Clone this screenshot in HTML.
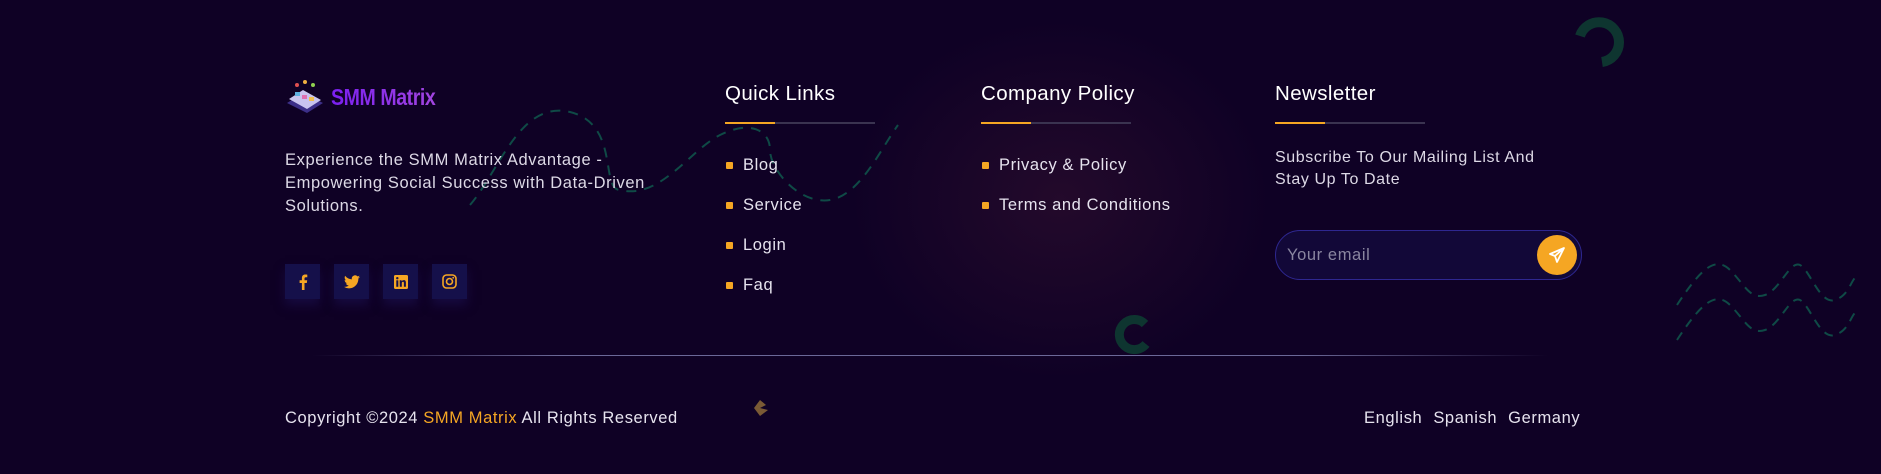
<!DOCTYPE html>
<html><head><meta charset="utf-8">
<style>
*{margin:0;padding:0;box-sizing:border-box}
body{width:1881px;height:474px;overflow:hidden;background:#0f0125;font-family:"Liberation Sans",sans-serif;color:#e6e3ee;position:relative;letter-spacing:0.6px}
.glow{position:absolute;left:850px;top:20px;width:420px;height:360px;background:radial-gradient(ellipse at center,rgba(60,20,50,0.45),rgba(15,1,37,0) 70%)}
.abs{position:absolute}
.logo{left:285px;top:79px;display:flex;align-items:center}
.logo span{font-weight:bold;font-size:23px;margin-left:6px;letter-spacing:-0.5px;background:linear-gradient(90deg,#7a1ff0,#a245e0);-webkit-background-clip:text;color:transparent;display:inline-block;transform:scaleX(0.85);transform-origin:left center}
.about{left:285px;top:149px;font-size:16.5px;line-height:23px;width:420px;color:#ddd9e6;white-space:nowrap}
.soc{top:264px;width:35px;height:35px;background:#15104a;display:flex;align-items:center;justify-content:center;box-shadow:0 6px 10px rgba(30,20,90,0.5)}
h3{position:absolute;font-weight:normal;font-size:20.5px;color:#fff;top:82px;letter-spacing:0.4px}
.ul{position:absolute;top:122px;height:2px;width:150px;background:#3a3350}
.ul i{display:block;width:50px;height:2px;background:#f5a623}
.li{position:absolute;font-size:16.5px;color:#e6e3ee;white-space:nowrap}
.li:before{content:"";position:absolute;left:-17px;top:6px;width:7px;height:7px;border-radius:1px;background:#f5a623}
.input{left:1275px;top:230px;width:307px;height:50px;border:1.5px solid #2e2790;border-radius:25px;background:#120838}
.input span{position:absolute;left:11px;top:15px;font-size:16.5px;color:#8a86a0}
.btn{position:absolute;right:4px;top:4px;width:40px;height:40px;border-radius:50%;background:#f5a623;display:flex;align-items:center;justify-content:center}
.div{left:312px;top:355px;width:1236px;height:1px;background:linear-gradient(90deg,rgba(120,120,170,0),rgba(130,130,180,0.8) 20%,rgba(130,130,180,0.8) 80%,rgba(120,120,170,0))}
.copy{left:285px;top:409px;font-size:16.5px;white-space:nowrap}
.lang{left:1364px;top:409px;font-size:16.5px;white-space:nowrap}
.lang span{margin-left:11px}
</style></head><body>
<div class="glow"></div>
<svg class="abs" style="left:0;top:0" width="1881" height="474">
<path d="M470 205 C500 170,520 100,570 112 S600 190,620 190 C660 200,690 150,720 135 S770 130,770 150 S800 205,830 200 S880 150,898 125" fill="none" stroke="#0f4a46" stroke-width="2" stroke-dasharray="10 8"/>
<path d="M1677 305 C1700 270,1715 255,1730 270 S1750 300,1765 295 S1790 260,1800 265 S1820 305,1835 300 S1850 280,1858 275" fill="none" stroke="#0f4a46" stroke-width="2" stroke-dasharray="9 7"/>
<path d="M1677 340 C1700 305,1715 290,1730 305 S1750 335,1765 330 S1790 295,1800 300 S1820 340,1835 335 S1850 315,1858 310" fill="none" stroke="#0f4a46" stroke-width="2" stroke-dasharray="9 7"/>
<path d="M1580 36 A20 20 0 1 1 1602 62" fill="none" stroke="#0e3530" stroke-width="10"/>
<path d="M1145 324 A15 15 0 1 0 1146 344" fill="none" stroke="#0e3530" stroke-width="9"/>
<path d="M754 408 L760 400 L766 405 L760 408 L768 410 L760 416 Z" fill="#7a5a35"/>
</svg>
<div class="abs logo"><svg width="40" height="36" viewBox="0 0 40 36"><path d="M2 24 L22 34 L38 24 L18 14Z" fill="#3c2f88"/><path d="M4 20 L22 30 L36 21 L18 11Z" fill="#c9c4ef"/><rect x="10" y="13" width="5" height="4" fill="#5fb0e0"/><rect x="17" y="16" width="5" height="4" fill="#e06fb0"/><rect x="24" y="18" width="5" height="4" fill="#f0c050"/><circle cx="20" cy="3" r="2" fill="#f0b040"/><circle cx="12" cy="6" r="2" fill="#e05050"/><circle cx="28" cy="6" r="2" fill="#90d050"/></svg><span>SMM Matrix</span></div>
<div class="abs about">Experience the SMM Matrix Advantage -<br>Empowering Social Success with Data-Driven<br>Solutions.</div>
<div class="abs soc" style="left:285px"><svg width="10" height="16" viewBox="0 0 10 16"><path d="M6.5 16V9h2.3l.4-2.8H6.5V4.5c0-.8.3-1.3 1.4-1.3H9.3V.7C9 .6 8.2.5 7.3.5 5.3.5 3.9 1.700 3.9 4v2.2H1.6V9h2.3v7z" fill="#f5a623"/></svg></div>
<div class="abs soc" style="left:334px"><svg width="16" height="14" viewBox="0 0 24 20"><path d="M24 2.4a9.8 9.8 0 0 1-2.8.8A4.9 4.9 0 0 0 23.3.4a9.900 9.9 0 0 1-3.1 1.2A4.9 4.9 0 0 0 11.8 6 14 14 0 0 1 1.7.9a4.9 4.9 0 0 0 1.5 6.6A4.9 4.9 0 0 1 1 6.9v.1a4.9 4.9 0 0 0 3.9 4.8 4.9 4.9 0 0 1-2.2.1 4.9 4.9 0 0 0 4.6 3.4A9.9 9.9 0 0 1 0 17.3 14 14 0 0 0 7.5 19.5c9.1 0 14-7.5 14-14v-.6A10 10 0 0 0 24 2.4z" fill="#f5a623"/></svg></div>
<div class="abs soc" style="left:383px"><svg width="14" height="14" viewBox="0 0 14 14"><rect width="14" height="14" rx="1.5" fill="#f5a623"/><rect x="2.3" y="5.3" width="2" height="6.5" fill="#15104a"/><circle cx="3.3" cy="3.2" r="1.2" fill="#15104a"/><path d="M5.7 5.3h1.9v1c.4-.7 1.2-1.2 2.2-1.2 1.6 0 2.1 1 2.1 2.6v4.1h-2V8.1c0-.8-.2-1.3-.9-1.3-.8 0-1.2.6-1.2 1.4v3.6h-2z" fill="#15104a"/></svg></div>
<div class="abs soc" style="left:432px"><svg width="15" height="15" viewBox="0 0 15 15"><rect x="1" y="1" width="13" height="13" rx="3.5" fill="none" stroke="#f5a623" stroke-width="1.6"/><circle cx="7.5" cy="7.5" r="3" fill="none" stroke="#f5a623" stroke-width="1.6"/><circle cx="11.2" cy="3.8" r=".9" fill="#f5a623"/></svg></div>

<h3 style="left:725px">Quick Links</h3><div class="ul" style="left:725px"><i></i></div>
<div class="li" style="left:743px;top:156px">Blog</div>
<div class="li" style="left:743px;top:196px">Service</div>
<div class="li" style="left:743px;top:236px">Login</div>
<div class="li" style="left:743px;top:276px">Faq</div>

<h3 style="left:981px">Company Policy</h3><div class="ul" style="left:981px"><i></i></div>
<div class="li" style="left:999px;top:156px">Privacy &amp; Policy</div>
<div class="li" style="left:999px;top:196px">Terms and Conditions</div>

<h3 style="left:1275px">Newsletter</h3><div class="ul" style="left:1275px"><i></i></div>
<div class="abs" style="left:1275px;top:147px;font-size:16px;line-height:22px;color:#ddd9e6;white-space:nowrap">Subscribe To Our Mailing List And<br>Stay Up To Date</div>
<div class="abs input"><span>Your email</span><div class="btn"><svg width="18" height="18" viewBox="0 0 18 18"><path d="M16 2 L2 8 L7 10 L9 16 Z M7 10 L16 2" fill="none" stroke="#fff" stroke-width="1.8" stroke-linejoin="round"/></svg></div></div>

<div class="abs div"></div>
<div class="abs copy">Copyright ©2024 <span style="color:#f5a623">SMM Matrix</span> All Rights Reserved</div>
<div class="abs lang">English<span>Spanish</span><span>Germany</span></div>
</body></html>
